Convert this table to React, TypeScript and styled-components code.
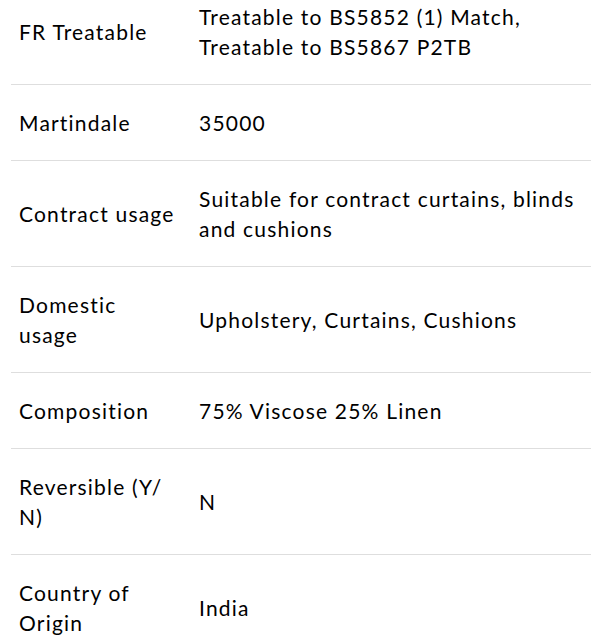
import React from "react";
import styled, { createGlobalStyle } from "styled-components";

const GlobalStyle = createGlobalStyle`
  html, body {
    margin: 0;
    padding: 0;
    background: #ffffff;
  }
  body {
    font-family: Lato, "Noto Sans", "DejaVu Sans", sans-serif;
    color: #000000;
    -webkit-font-smoothing: antialiased;
  }
`;

const Wrapper = styled.div`
  margin: -21px 4px 0 11px;
`;

const SpecTable = styled.table`
  width: 580px;
  border-collapse: collapse;
  table-layout: fixed;
`;

const Row = styled.tr`
  border-bottom: 1px solid #dedede;
`;

const Cell = styled.td`
  padding: 22.5px 8px;
  vertical-align: middle;
  font-size: 21px;
  line-height: 30px;
  font-weight: 400;
  letter-spacing: 1.2px;
  color: #000;
`;

const LabelCell = styled(Cell)`
  width: 158px;
  padding-right: 14px;
`;

const ValueCell = styled(Cell)``;

const specs: { key: string; label: React.ReactNode; value: string }[] = [
  { key: "fr", label: "FR Treatable", value: "Treatable to BS5852 (1) Match, Treatable to BS5867 P2TB" },
  { key: "mart", label: "Martindale", value: "35000" },
  { key: "contract", label: "Contract usage", value: "Suitable for contract curtains, blinds and cushions" },
  { key: "domestic", label: "Domestic usage", value: "Upholstery, Curtains, Cushions" },
  { key: "comp", label: "Composition", value: "75% Viscose 25% Linen" },
  {
    key: "rev",
    label: (
      <>
        Reversible (Y/<wbr />N)
      </>
    ),
    value: "N",
  },
  { key: "country", label: "Country of Origin", value: "India" },
];

export default function App() {
  return (
    <>
      <GlobalStyle />
      <Wrapper>
        <SpecTable>
          <tbody>
            {specs.map((s) => (
              <Row key={s.key}>
                <LabelCell>{s.label}</LabelCell>
                <ValueCell>{s.value}</ValueCell>
              </Row>
            ))}
          </tbody>
        </SpecTable>
      </Wrapper>
    </>
  );
}
